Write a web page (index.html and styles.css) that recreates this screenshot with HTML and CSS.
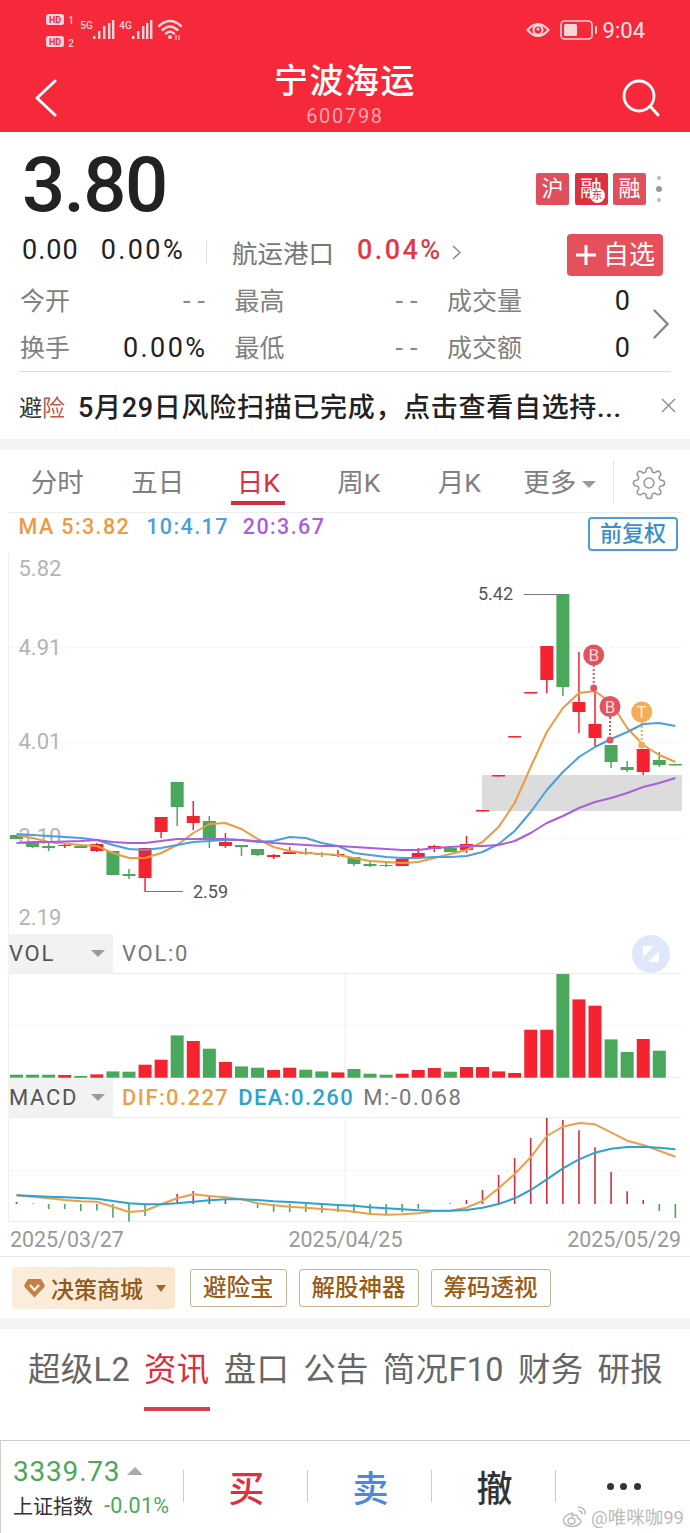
FILE: index.html
```html
<!DOCTYPE html>
<html lang="zh-CN">
<head>
  <meta charset="UTF-8" />
  <title>宁波海运 600798</title>
  <link rel="stylesheet" href="styles.css">
</head>
<body>
  <header class="topbar">
    <div class="statusbar">
      <svg class="status-left" width="140" height="38" viewBox="46 12 140 38">
        <rect x="46" y="14" width="18" height="11" rx="2.5" fill="#fbd5d8"/>
        <text x="55" y="23" class="hd">HD</text>
        <text x="71" y="24" class="sim">1</text>
        <rect x="46" y="36" width="18" height="11" rx="2.5" fill="#fbd5d8"/>
        <text x="55" y="45" class="hd">HD</text>
        <text x="71" y="47" class="sim">2</text>
        <text x="86.5" y="29" class="net">5G</text>
        <g fill="#fbd5d8">
          <rect x="93" y="36" width="2.4" height="3"/><rect x="98" y="31" width="2.4" height="8"/>
          <rect x="103" y="26" width="2.4" height="13"/><rect x="108" y="23" width="2.4" height="16"/><rect x="112" y="20" width="2.4" height="19"/>
        </g>
        <text x="125.5" y="29" class="net">4G</text>
        <g fill="#fbd5d8">
          <rect x="132" y="36" width="2.4" height="3"/><rect x="137" y="31" width="2.4" height="8"/>
          <rect x="142" y="26" width="2.4" height="13"/><rect x="146" y="23" width="2.4" height="16"/><rect x="150" y="20" width="2.4" height="19"/>
        </g>
        <g fill="none" stroke="#fbd5d8" stroke-width="2.4" stroke-linecap="round">
          <path d="M159 26 Q170 16 181 26"/>
          <path d="M162.500 30 Q170 23 177.500 30"/>
          <path d="M166 33.500 Q170 30 174 33.500"/>
        </g>
        <circle cx="170" cy="37" r="2" fill="#fbd5d8"/>
        <path d="M176 35v5M179 35v5" stroke="#fbd5d8" stroke-width="1.200"/>
      </svg>
      <div class="status-right">
        <svg width="24" height="20" viewBox="0 0 24 20">
          <path d="M1.500 10 Q12 -2 22.500 10 Q12 22 1.500 10z" fill="none" stroke="#fbd5d8" stroke-width="2"/>
          <circle cx="12" cy="10" r="4.500" fill="none" stroke="#fbd5d8" stroke-width="2"/>
          <circle cx="12" cy="9" r="1.500" fill="#fbd5d8"/>
        </svg>
        <svg class="battery" width="38" height="20" viewBox="0 0 38 20">
          <rect x="1" y="1" width="31" height="18" rx="3.500" fill="none" stroke="#fbd5d8" stroke-width="1.600"/>
          <rect x="4" y="4" width="13" height="12" rx="1.500" fill="#fbd5d8"/>
          <rect x="35" y="6" width="2" height="8" rx="1" fill="#fbd5d8"/>
        </svg>
        <span class="clock">9:04</span>
      </div>
    </div>
    <div class="titlebar">
      <svg class="back" width="24" height="38" viewBox="0 0 24 38">
        <path d="M21 2 L3 19 L21 36" fill="none" stroke="#fff" stroke-width="3" stroke-linecap="round" stroke-linejoin="round"/>
      </svg>
      <div class="title">
        <h1>宁波海运</h1>
        <p>600798</p>
      </div>
      <svg class="search" width="40" height="38" viewBox="0 0 40 38">
        <circle cx="17" cy="17" r="15" fill="none" stroke="#fff" stroke-width="2.800"/>
        <path d="M28 27 L36 36" stroke="#fff" stroke-width="3" stroke-linecap="round"/>
      </svg>
    </div>
  </header>

  <section class="quote">
    <div class="quote-top">
      <div class="price">3.80</div>
      <div class="badges">
        <span class="badge">沪</span>
        <span class="badge dark">融<i>东</i></span>
        <span class="badge">融</span>
        <span class="more-dots"><b></b><b class="big"></b><b></b></span>
      </div>
    </div>
    <div class="quote-change">
      <span class="num">0.00</span>
      <span class="num pct">0.00%</span>
      <span class="sep"></span>
      <span class="sector">航运港口</span>
      <span class="num sector-pct">0.04%</span>
      <svg class="sector-arrow" width="9" height="15" viewBox="0 0 9 15">
        <path d="M1 1 L8 7.500 L1 14" fill="none" stroke="#888" stroke-width="1.500"/>
      </svg>
      <button class="add-btn">
        <svg width="22" height="22" viewBox="0 0 22 22"><path d="M11 1V21M1 11H21" stroke="#fff" stroke-width="3"/></svg>
        <span>自选</span>
      </button>
    </div>
    <div class="stats-wrap">
      <div class="stats">
        <div class="stat"><span>今开</span><b class="dash">--</b></div>
        <div class="stat"><span>最高</span><b class="dash">--</b></div>
        <div class="stat"><span>成交量</span><b>0</b></div>
        <div class="stat"><span>换手</span><b>0.00%</b></div>
        <div class="stat"><span>最低</span><b class="dash">--</b></div>
        <div class="stat"><span>成交额</span><b>0</b></div>
      </div>
      <svg class="stats-arrow" width="16" height="30" viewBox="0 0 16 30">
        <path d="M1.500 1.500 L14.500 15 L1.500 28.500" fill="none" stroke="#888" stroke-width="2.400" stroke-linecap="round"/>
      </svg>
    </div>
    <div class="divider"></div>
    <div class="notice">
      <span class="notice-tag">避<em>险</em></span>
      <span class="notice-text">5月29日风险扫描已完成，点击查看自选持...</span>
      <svg class="notice-close" width="15" height="15" viewBox="0 0 15 15">
        <path d="M1 1 L14 14 M14 1 L1 14" stroke="#888" stroke-width="1.300"/>
      </svg>
    </div>
  </section>

  <div class="band"></div>

  <section class="kline">
    <nav class="period-tabs">
      <span class="period">分时</span>
      <span class="period">五日</span>
      <span class="period active">日K</span>
      <span class="period">周K</span>
      <span class="period">月K</span>
      <span class="period">更多<i class="caret"></i></span>
      <span class="period-sep"></span>
      <svg class="gear" width="34" height="34" viewBox="0 0 24 24" fill="none" stroke="#999" stroke-width="1.100">
        <circle cx="12" cy="12" r="3.500"/>
        <path d="M19.400 15a1.650 1.650 0 0 0 .33 1.820l.06.06a2 2 0 0 1 0 2.830 2 2 0 0 1-2.830 0l-.06-.06a1.650 1.650 0 0 0-1.820-.33 1.650 1.650 0 0 0-1 1.510V21a2 2 0 0 1-2 2 2 2 0 0 1-2-2v-.09A1.650 1.650 0 0 0 9 19.400a1.650 1.650 0 0 0-1.820.33l-.06.06a2 2 0 0 1-2.830 0 2 2 0 0 1 0-2.830l.06-.06a1.650 1.650 0 0 0 .33-1.820 1.650 1.650 0 0 0-1.510-1H3a2 2 0 0 1-2-2 2 2 0 0 1 2-2h.09A1.650 1.650 0 0 0 4.600 9a1.650 1.650 0 0 0-.33-1.820l-.06-.06a2 2 0 0 1 0-2.830 2 2 0 0 1 2.830 0l.06.06a1.650 1.650 0 0 0 1.820.33H9a1.650 1.650 0 0 0 1-1.510V3a2 2 0 0 1 2-2 2 2 0 0 1 2 2v.09a1.650 1.650 0 0 0 1 1.510 1.650 1.650 0 0 0 1.820-.33l.06-.06a2 2 0 0 1 2.830 0 2 2 0 0 1 0 2.830l-.06.06a1.650 1.650 0 0 0-.33 1.820V9a1.650 1.650 0 0 0 1.510 1H21a2 2 0 0 1 2 2 2 2 0 0 1-2 2h-.09a1.650 1.650 0 0 0-1.510 1z"/>
      </svg>
    </nav>

    <div class="ma-legend">
      <span class="ma5">MA 5:3.82</span>
      <span class="ma10">10:4.17</span>
      <span class="ma20">20:3.67</span>
      <button class="adjust-btn">前复权</button>
    </div>

    <svg class="chart" width="690" height="381" viewBox="0 553 690 381">
      <path d="M8.500 553V934" stroke="#f0f0f0"/>
      <g stroke="#f0f0f0" stroke-dasharray="4 4">
        <path d="M9 647.500H682M9 742.500H682M9 838.500H682"/>
      </g>
      <g class="axis">
        <text x="18.500" y="576">5.82</text>
        <text x="18.500" y="655">4.91</text>
        <text x="18.500" y="749">4.01</text>
        <text x="18.500" y="844">3.10</text>
        <text x="18.500" y="925">2.19</text>
      </g>
      <rect x="482" y="775" width="200" height="36" fill="#dcdcdc"/>
      <g id="candles"></g>
      <polyline id="ma5" class="line" stroke="#ec9a44"/>
      <polyline id="ma10" class="line" stroke="#4a9fdc"/>
      <polyline id="ma20" class="line" stroke="#a95edc"/>
      <path d="M145 891.500H183M524 594.500H562" stroke="#777" stroke-width="1"/>
      <text x="193" y="898" class="peak">2.59</text>
      <text x="478" y="600" class="peak">5.42</text>
      <g class="pin" fill="#e2535e" stroke="#e2535e">
        <path d="M593.700 665V688" stroke-width="2" stroke-dasharray="2 2"/>
        <circle cx="593.700" cy="688" r="3.500" stroke="none"/>
        <circle cx="593.700" cy="655" r="10.500" stroke="none"/>
        <text x="593.700" y="661" fill="#fbdcdc" stroke="none">B</text>
        <path d="M610 717V740" stroke-width="2" stroke-dasharray="2 2"/>
        <circle cx="610" cy="740" r="3.500" stroke="none"/>
        <circle cx="610" cy="706.500" r="10.500" stroke="none"/>
        <text x="610" y="712.500" fill="#fbdcdc" stroke="none">B</text>
      </g>
      <g class="pin" fill="#f6ab55" stroke="#f6ab55">
        <path d="M641.700 722V745" stroke-width="2" stroke-dasharray="2 2"/>
        <circle cx="641.700" cy="745" r="3.500" stroke="none"/>
        <circle cx="641.700" cy="712" r="10.500" stroke="none"/>
        <text x="641.700" y="718" fill="#fdeedd" stroke="none">T</text>
      </g>
    </svg>

    <div class="sub-head">
      <div class="sub-tab">VOL<i class="caret"></i></div>
      <span class="sub-gray">VOL:0</span>
      <svg class="expand" width="38" height="38" viewBox="0 0 38 38">
        <circle cx="19" cy="19" r="19" fill="#dfe7fb"/>
        <path d="M11 11H22L11 22zM27 27H16L27 16z" fill="#fff"/>
      </svg>
    </div>
    <svg class="chart" width="690" height="105" viewBox="0 973 690 105">
      <path d="M8 973.500H682M8 1077.500H682M345 973V1078M8.500 973V1078" stroke="#eee"/>
      <path d="M9 1025.500H682" stroke="#f0f0f0" stroke-dasharray="4 4"/>
      <g id="volume"></g>
    </svg>

    <div class="sub-head">
      <div class="sub-tab">MACD<i class="caret"></i></div>
      <span class="dif">DIF:0.227</span>
      <span class="dea">DEA:0.260</span>
      <span class="sub-gray">M:-0.068</span>
    </div>
    <svg class="chart" width="690" height="105" viewBox="0 1117 690 105">
      <path d="M8 1117.500H682M8 1221.500H682M345 1117V1222M8.500 1117V1222" stroke="#eee"/>
      <path d="M9 1170.500H682" stroke="#f0f0f0" stroke-dasharray="4 4"/>
      <g id="macd"></g>
      <polyline id="dif" class="line" stroke="#ec9f4a"/>
      <polyline id="dea" class="line" stroke="#2ba3cf"/>
    </svg>

    <div class="dates">
      <span>2025/03/27</span>
      <span>2025/04/25</span>
      <span>2025/05/29</span>
    </div>
  </section>

  <section class="tools">
    <div class="mall">
      <svg width="21" height="20" viewBox="0 0 21 20">
        <path d="M4 1H17L20.500 6.500V9L10.500 19.500L.5 9V6.500z" fill="#c47f45"/>
        <path d="M6 7L10.500 12L15 7" fill="none" stroke="#fbeedd" stroke-width="2.400"/>
      </svg>
      <span>决策商城</span>
      <i class="mall-caret"></i>
    </div>
    <span class="tool">避险宝</span>
    <span class="tool">解股神器</span>
    <span class="tool">筹码透视</span>
  </section>

  <div class="band"></div>

  <nav class="info-tabs">
    <span>超级L2</span>
    <span class="active">资讯</span>
    <span>盘口</span>
    <span>公告</span>
    <span>简况F10</span>
    <span>财务</span>
    <span>研报</span>
  </nav>

  <footer class="bottombar">
    <div class="index">
      <div class="index-top">3339.73<i class="index-up"></i></div>
      <div class="index-bottom"><span>上证指数</span><b>-0.01%</b></div>
    </div>
    <div class="action buy">买</div>
    <div class="action sell">卖</div>
    <div class="action cancel">撤</div>
    <div class="action more"><b></b><b></b><b></b></div>
    <div class="watermark">
      <svg width="25" height="23" viewBox="0 0 25 23" fill="none" stroke="#bbb" stroke-width="1.500">
        <path d="M10 8C4 9.500 1 13 1.500 16C2.500 21 9 22 13 21C18 20 20 16.500 18 14.500C17 13.500 15.500 13.500 15.500 13C16 11 15 10 13 10C11.500 10 10 11 10 11C10.500 9 11 7.500 10 8z"/>
        <ellipse cx="9.500" cy="16" rx="3.500" ry="3"/>
        <path d="M16 2.500C20 1.500 24 5 23 9.500M16.500 6C18.500 5.500 20.500 7 20 9.500"/>
      </svg>
      <span>@唯咪咖99</span>
    </div>
  </footer>

  <script src="script.js"></script>
</body>
</html>
```

FILE: styles.css
```css
* {
  box-sizing: border-box;
  margin: 0;
  padding: 0;
}

body {
  width: 690px;
  height: 1533px;
  overflow: hidden;
  background: #fff;
  color: #222;
  font-family: Roboto, "Noto Sans CJK SC", sans-serif;
}

i, em {
  font-style: normal;
}

button {
  border: none;
  font-family: inherit;
}

.band {
  height: 11px;
  background: #f4f4f4;
}

.caret {
  display: inline-block;
  width: 0;
  height: 0;
  border-left: 7px solid transparent;
  border-right: 7px solid transparent;
  border-top: 7px solid #999;
}

/* header */
.topbar {
  height: 132px;
  background: #f6293a;
  color: #fff;
}

.statusbar {
  height: 52px;
  padding: 12px 45px 0 46px;
  display: flex;
  justify-content: space-between;
}

.hd {
  font-size: 9px;
  font-weight: 700;
  fill: #f6293a;
  text-anchor: middle;
}

.sim, .net {
  font-size: 10px;
  font-weight: 500;
  fill: #fbd5d8;
  text-anchor: middle;
}

.status-right {
  height: 36px;
  display: flex;
  align-items: center;
  color: #fbe3e5;
  font-size: 22px;
}

.battery {
  margin-left: 10px;
}

.clock {
  margin-left: 5px;
}

.titlebar {
  height: 80px;
  display: grid;
  grid-template-columns: 1fr auto 1fr;
}

.back {
  margin: 27px 0 0 34px;
}

.search {
  margin: 27px 0 0 auto;
  margin-right: 28px;
}

.title {
  text-align: center;
}

.title h1 {
  margin-top: 9px;
  font-size: 34px;
  line-height: 40px;
  font-weight: 500;
  letter-spacing: 1.500px;
}

.title p {
  margin-top: 3px;
  font-size: 20px;
  line-height: 24px;
  letter-spacing: 1.700px;
  color: #fba6ad;
}

/* quote */
.quote-top {
  height: 96px;
  padding: 15px 27.500px 0 22px;
  display: flex;
  justify-content: space-between;
}

.price {
  font-size: 76px;
  line-height: 76px;
  letter-spacing: -1.500px;
  font-weight: 500;
  color: #222;
}

.badges {
  height: 32px;
  margin-top: 26px;
  display: flex;
  gap: 5.500px;
}

.badge {
  position: relative;
  width: 33px;
  height: 32px;
  background: #e0505c;
  border-radius: 2px;
  color: #fff;
  font-size: 22px;
  line-height: 31px;
  text-align: center;
}

.badge.dark {
  background: #e0303f;
}

.badge i {
  position: absolute;
  right: 3px;
  bottom: 2px;
  width: 15px;
  height: 15px;
  border-radius: 50%;
  background: #fff;
  color: #d8303e;
  font-size: 11px;
  line-height: 15px;
}

.more-dots {
  width: 7px;
  margin-left: 4px;
  display: flex;
  flex-direction: column;
  align-items: center;
  justify-content: space-between;
  padding: 3px 0;
}

.more-dots b {
  width: 4px;
  height: 4px;
  border-radius: 50%;
  background: #bbb;
}

.more-dots b.big {
  width: 6px;
  height: 6px;
  background: #999;
}

.quote-change {
  height: 49px;
  padding: 0 27px 0 22px;
  display: flex;
  align-items: center;
}

.num {
  margin-bottom: 6px;
  font-size: 27px;
  letter-spacing: 1px;
  color: #222;
}

.pct {
  margin-left: 22px;
  letter-spacing: 2.400px;
}

.sep {
  width: 1px;
  height: 23px;
  margin: 0 25px 0 21px;
  background: #ddd;
}

.sector {
  margin-bottom: 2px;
  font-size: 25.500px;
  color: #777;
}

.sector-pct {
  margin-left: 23px;
  letter-spacing: 2.400px;
  font-weight: 500;
  color: #dc3a4b;
}

.sector-arrow {
  margin: 0 0 0 9px;
}

.add-btn {
  margin: 5px 0 0 auto;
  width: 96px;
  height: 42px;
  background: #e5505a;
  border-radius: 4px;
  color: #fff;
  font-size: 26px;
  line-height: 42px;
  display: flex;
  align-items: center;
  justify-content: center;
  gap: 6px;
}

.stats-wrap {
  padding-left: 20px;
  display: flex;
  align-items: center;
}

.stats {
  display: grid;
  grid-template-columns: 185px 183px 183px;
  grid-auto-rows: 47px;
  column-gap: 29.500px;
}

.stat {
  display: flex;
  justify-content: space-between;
  align-items: center;
}

.stat span {
  margin-bottom: 3px;
  font-size: 25px;
  color: #808080;
}

.stat b {
  font-size: 27px;
  font-weight: 400;
  letter-spacing: 2.400px;
  margin-right: -2.400px;
}

.stat b.dash {
  letter-spacing: 7px;
  margin-right: -7px;
  color: #888;
}

.stats-arrow {
  margin-left: 23px;
}

.divider {
  height: 1px;
  margin: 0 19px;
  background: #ddd;
}

.notice {
  height: 67px;
  padding: 0 14px 0 19px;
  display: flex;
  align-items: center;
}

.notice-tag {
  width: 59px;
  font-size: 23px;
  color: #333;
}

.notice-tag em {
  color: #b8584a;
}

.notice-text {
  font-size: 27px;
  letter-spacing: .700px;
  font-weight: 500;
  color: #222;
  white-space: nowrap;
}

.notice-close {
  margin-left: auto;
}

/* k line */
.period-tabs {
  height: 62px;
  padding: 3px 0 0 7px;
  display: flex;
  align-items: center;
}

.period {
  position: relative;
  width: 100.500px;
  font-size: 26.500px;
  line-height: 36px;
  color: #808080;
  text-align: center;
}

.period .caret {
  margin-left: 6px;
  vertical-align: 4px;
}

.period.active {
  color: #d8303e;
}

.period.active::after {
  content: "";
  position: absolute;
  left: 23px;
  right: 24px;
  bottom: -4px;
  height: 4px;
  background: #d02f3c;
}

.period-sep {
  width: 1px;
  height: 43px;
  margin-left: 3px;
  background: #e4e4e4;
}

.gear {
  margin-left: 18px;
}

.ma-legend {
  height: 41px;
  margin-left: 8px;
  width: 674px;
  padding: 0 4px 0 10.500px;
  border-top: 1px solid #eee;
  display: flex;
  font-size: 21.500px;
  font-weight: 500;
  line-height: 27px;
  letter-spacing: 1.400px;
}

.ma5 { color: #ec9a44; }
.ma10 { color: #4a9fdc; margin-left: 16px; }
.ma20 { color: #a95edc; margin-left: 14px; }

.adjust-btn {
  margin: 4px 0 0 auto;
  width: 90px;
  height: 34px;
  background: #fff;
  border: 2px solid #4a9fd0;
  border-radius: 4px;
  color: #3a8fc8;
  font-size: 22px;
  font-weight: 500;
  line-height: 28px;
  letter-spacing: 0;
}

.chart {
  display: block;
}

.axis text {
  font-size: 22px;
  fill: #b4b4b4;
}

.peak {
  font-size: 18px;
  fill: #555;
}

.line {
  fill: none;
  stroke-width: 2;
  stroke-linejoin: round;
}

.pin text {
  font-size: 17px;
  text-anchor: middle;
}

.sub-head {
  height: 39px;
  margin-left: 8px;
  width: 674px;
  display: flex;
  align-items: center;
  font-size: 22px;
  letter-spacing: 1.700px;
}

.sub-tab {
  width: 105px;
  height: 39px;
  padding: 0 8px 0 1px;
  background: #f2f2f2;
  color: #555;
  display: flex;
  align-items: center;
  justify-content: space-between;
}

.sub-gray {
  margin-left: 9px;
  color: #777;
}

.dif {
  margin-left: 9px;
  letter-spacing: 1.400px;
  color: #ec9f4a;
  font-weight: 500;
}

.dea {
  margin-left: 9px;
  letter-spacing: 1.400px;
  color: #2ba3cf;
  font-weight: 500;
}

.expand {
  margin-left: auto;
  margin-right: 12px;
}

.dates {
  height: 35px;
  padding: 0 9px 0 10px;
  display: flex;
  justify-content: space-between;
  align-items: center;
  font-size: 21.400px;
  color: #999;
  border-bottom: 1px solid #e8e8e8;
}

/* tools */
.tools {
  height: 61px;
  padding: 10px 0 0 12px;
  display: flex;
  align-items: flex-start;
}

.mall {
  width: 163px;
  height: 42px;
  padding-left: 12px;
  background: linear-gradient(90deg, #fbeedd, #f9e6cf);
  border-radius: 4px;
  display: flex;
  align-items: center;
  color: #8f5a1c;
  font-size: 23px;
  font-weight: 500;
}

.mall span {
  margin-left: 6px;
}

.mall-caret {
  margin-left: 13px;
  border-left: 5px solid transparent;
  border-right: 5px solid transparent;
  border-top: 7px solid #a9651f;
}

.tool {
  height: 38px;
  margin: 2px 0 0 12px;
  padding: 0 12px;
  border: 1px solid #cdb293;
  border-radius: 3px;
  color: #9a5c14;
  font-size: 23.500px;
  font-weight: 500;
  line-height: 36px;
  white-space: nowrap;
}

.mall + .tool {
  margin-left: 15px;
}

/* info tabs */
.info-tabs {
  height: 111px;
  padding: 19px 0 0 28px;
  display: flex;
  align-items: flex-start;
  gap: 14px;
  font-size: 32.400px;
  letter-spacing: .400px;
  color: #666;
}

.info-tabs span {
  line-height: 44px;
  padding-bottom: 15px;
  white-space: nowrap;
}

.info-tabs .active {
  color: #d8303e;
  border-bottom: 4px solid #d8404c;
}

/* bottom bar */
.bottombar {
  position: relative;
  height: 93px;
  border-top: 1px solid #ccc;
  border-left: 1px solid #ccc;
  display: flex;
}

.index {
  width: 182px;
  padding-left: 12px;
}

.index-top {
  margin-top: 13px;
  height: 34px;
  display: flex;
  align-items: center;
  font-size: 28px;
  letter-spacing: .800px;
  color: #4aa85c;
}

.index-up {
  margin-left: 7px;
  border-left: 8px solid transparent;
  border-right: 8px solid transparent;
  border-bottom: 8px solid #aaa;
}

.index-bottom {
  margin-top: 3px;
  display: flex;
  align-items: center;
  gap: 11px;
  white-space: nowrap;
}

.index-bottom span {
  font-size: 20px;
  color: #333;
}

.index-bottom b {
  font-size: 21.500px;
  letter-spacing: .300px;
  font-weight: 400;
  color: #4aa85c;
}

.action {
  width: 124px;
  height: 32px;
  margin-top: 29px;
  padding-left: 2px;
  border-left: 1px solid #ccc;
  display: flex;
  align-items: center;
  justify-content: center;
  font-size: 36px;
  font-weight: 500;
}

.buy { color: #e0303f; }
.sell { color: #4a8ad8; }
.cancel { color: #333; }

.more {
  gap: 6.500px;
  padding-left: 12px;
}

.more b {
  width: 7px;
  height: 7px;
  border-radius: 50%;
  background: #333;
}

.watermark {
  position: absolute;
  right: 6px;
  bottom: 4px;
  display: flex;
  align-items: center;
  gap: 4px;
  color: #bbb;
  font-size: 18.500px;
}
```

FILE: script.js
```js
const RED = "#f5222f";
const GREEN = "#4aa85c";
const NS = "http://www.w3.org/2000/svg";

function xAt(i) {
  return 16.5 + i * 16.07;
}

function addRect(group, x, y, w, h, fill) {
  const r = document.createElementNS(NS, "rect");
  r.setAttribute("x", x);
  r.setAttribute("y", y);
  r.setAttribute("width", w);
  r.setAttribute("height", h);
  r.setAttribute("fill", fill);
  group.appendChild(r);
}

function setLine(id, ys) {
  const pts = ys.map((y, i) => xAt(i).toFixed(1) + "," + y);
  document.getElementById(id).setAttribute("points", pts.join(" "));
}

// color, body top, body bottom, wick top, wick bottom (page y)
const candles = [
  ["g", 835, 839, 835, 839], ["g", 843, 847, 842, 848], ["g", 846, 848, 843, 851],
  ["r", 845, 846, 843, 848], ["g", 846, 848, 846, 848], ["r", 844, 851, 843, 852],
  ["g", 851, 875, 851, 875], ["g", 874, 876, 869, 879], ["r", 848, 878, 848, 892],
  ["r", 817, 832, 817, 838], ["g", 782, 807, 782, 826], ["r", 816, 823, 801, 830],
  ["g", 821, 838, 816, 848], ["r", 842, 846, 833, 848], ["g", 845, 847, 845, 856],
  ["g", 849, 855, 849, 856], ["r", 855, 857, 854, 859], ["r", 852, 854, 847, 854],
  ["g", 852, 854, 848, 855], ["g", 854, 855, 852, 857], ["r", 854, 856, 850, 857],
  ["g", 857, 864, 857, 866], ["g", 864, 866, 860, 867], ["g", 865, 866, 862, 867],
  ["r", 859, 866, 859, 866], ["r", 853, 857, 848, 858], ["r", 846, 849, 845, 852],
  ["g", 848, 852, 846, 852], ["r", 844, 850, 836, 853], ["r", 810, 811.5, 810, 811.5],
  ["r", 775, 776.5, 775, 776.5], ["r", 736, 737.5, 736, 737.5], ["r", 692, 693.5, 692, 693.5],
  ["r", 646, 680, 646, 693], ["g", 594, 687, 594, 696], ["r", 702, 712, 652, 733],
  ["r", 724, 738, 690, 747], ["g", 745, 762, 745, 768], ["g", 767, 770, 761, 772],
  ["r", 749, 772, 749, 775], ["g", 760, 765, 752, 767], ["g", 764, 765.5, 764, 765.5]
];

const ma5 = [835, 838, 842, 843.5, 845, 846, 853, 858, 858, 853, 845, 833, 824, 823, 829, 839, 847, 851, 853, 854, 855,
  858, 861, 862, 863, 862, 858, 854, 850, 842, 827, 803, 767, 732, 708, 693, 691, 703, 728, 745, 755, 762];
const ma10 = [834, 835, 836, 837, 838, 840, 845, 849, 850, 848, 845, 842, 841, 840, 840, 842, 841, 837, 838, 843, 846,
  853, 855, 857, 858, 858, 857, 857, 856, 852, 844, 831, 812, 790, 772, 757, 747, 739, 732, 724, 723, 726];
const ma20 = [843, 842, 842, 841.5, 841, 840, 842, 843, 843, 841, 839, 839, 839, 839, 840, 841, 843, 844, 845, 846, 846,
  847, 848, 849, 850, 850, 848, 847, 846, 846, 845, 841, 833, 823, 816, 808, 802, 798, 793, 787, 783, 778];

// bar heights, color follows the candle of the same day
const volume = [3, 3, 3, 2.7, 1.7, 3.3, 6.3, 6, 13, 18, 42.3, 36.7, 29, 15.7, 11.3, 10, 7.7, 10, 8, 6.3, 5.3,
  8.7, 4, 3, 4, 7.7, 9.7, 6, 10.7, 10.7, 6.3, 4.7, 48, 48, 103.7, 78.3, 72, 38.3, 25.7, 38.7, 27, 0];

// positive goes up in red, negative down in green
const macd = [2, 0.5, -5, -5, -7, -6.5, -13.7, -17.7, -12, 0, 10, 13, 8, 4.7, 0.3, -4, -7.7, -8, -8, -8.7, -8,
  -9.3, -10, -10, -8, -4.7, 0.3, 0.7, 4, 14, 29, 46, 66, 86, 84, 73.7, 56.7, 32, 12.7, 4, -7, -14];

const dif = [1195.3, 1196.7, 1198.3, 1200, 1201.3, 1201.7, 1206.7, 1212, 1210.7, 1204.3, 1198.3, 1194.3, 1196, 1197.3,
  1199.3, 1203.3, 1205.3, 1206.7, 1207.7, 1209, 1210, 1211.7, 1214, 1214.7, 1214.3, 1213.3, 1211, 1210.7, 1207.7, 1201,
  1188.3, 1174, 1157.3, 1136, 1126.7, 1123, 1124.3, 1132.3, 1140.7, 1145, 1150.7, 1156.7];
const dea = [1195.3, 1196, 1196.7, 1197.3, 1198, 1198.7, 1201, 1203.3, 1204.3, 1204.3, 1203.3, 1201.7, 1200.3, 1199.3,
  1199.3, 1200, 1201.3, 1202, 1203, 1204, 1205, 1205.7, 1207.3, 1208.3, 1209.3, 1210.3, 1210.7, 1210.7, 1210, 1207.7,
  1204, 1198.3, 1190, 1179.3, 1168.3, 1159.3, 1152.7, 1148.7, 1147, 1146.7, 1147.7, 1149.3];

const candleGroup = document.getElementById("candles");
candles.forEach((c, i) => {
  const color = c[0] === "r" ? RED : GREEN;
  const x = xAt(i);
  addRect(candleGroup, x - 0.75, c[3], 1.5, c[4] - c[3], color);
  addRect(candleGroup, x - 6.5, c[1], 13, c[2] - c[1], color);
});

const volGroup = document.getElementById("volume");
volume.forEach((h, i) => {
  const color = candles[i][0] === "r" ? RED : GREEN;
  addRect(volGroup, xAt(i) - 6.5, 1077.7 - h, 13, h, color);
});

const macdGroup = document.getElementById("macd");
macd.forEach((v, i) => {
  if (v > 0) addRect(macdGroup, xAt(i) - 0.8, 1204 - v, 1.6, v, "#cf2f40");
  else addRect(macdGroup, xAt(i) - 0.8, 1204, 1.6, -v, GREEN);
});

setLine("ma5", ma5);
setLine("ma10", ma10);
setLine("ma20", ma20);
setLine("dif", dif);
setLine("dea", dea);
```
